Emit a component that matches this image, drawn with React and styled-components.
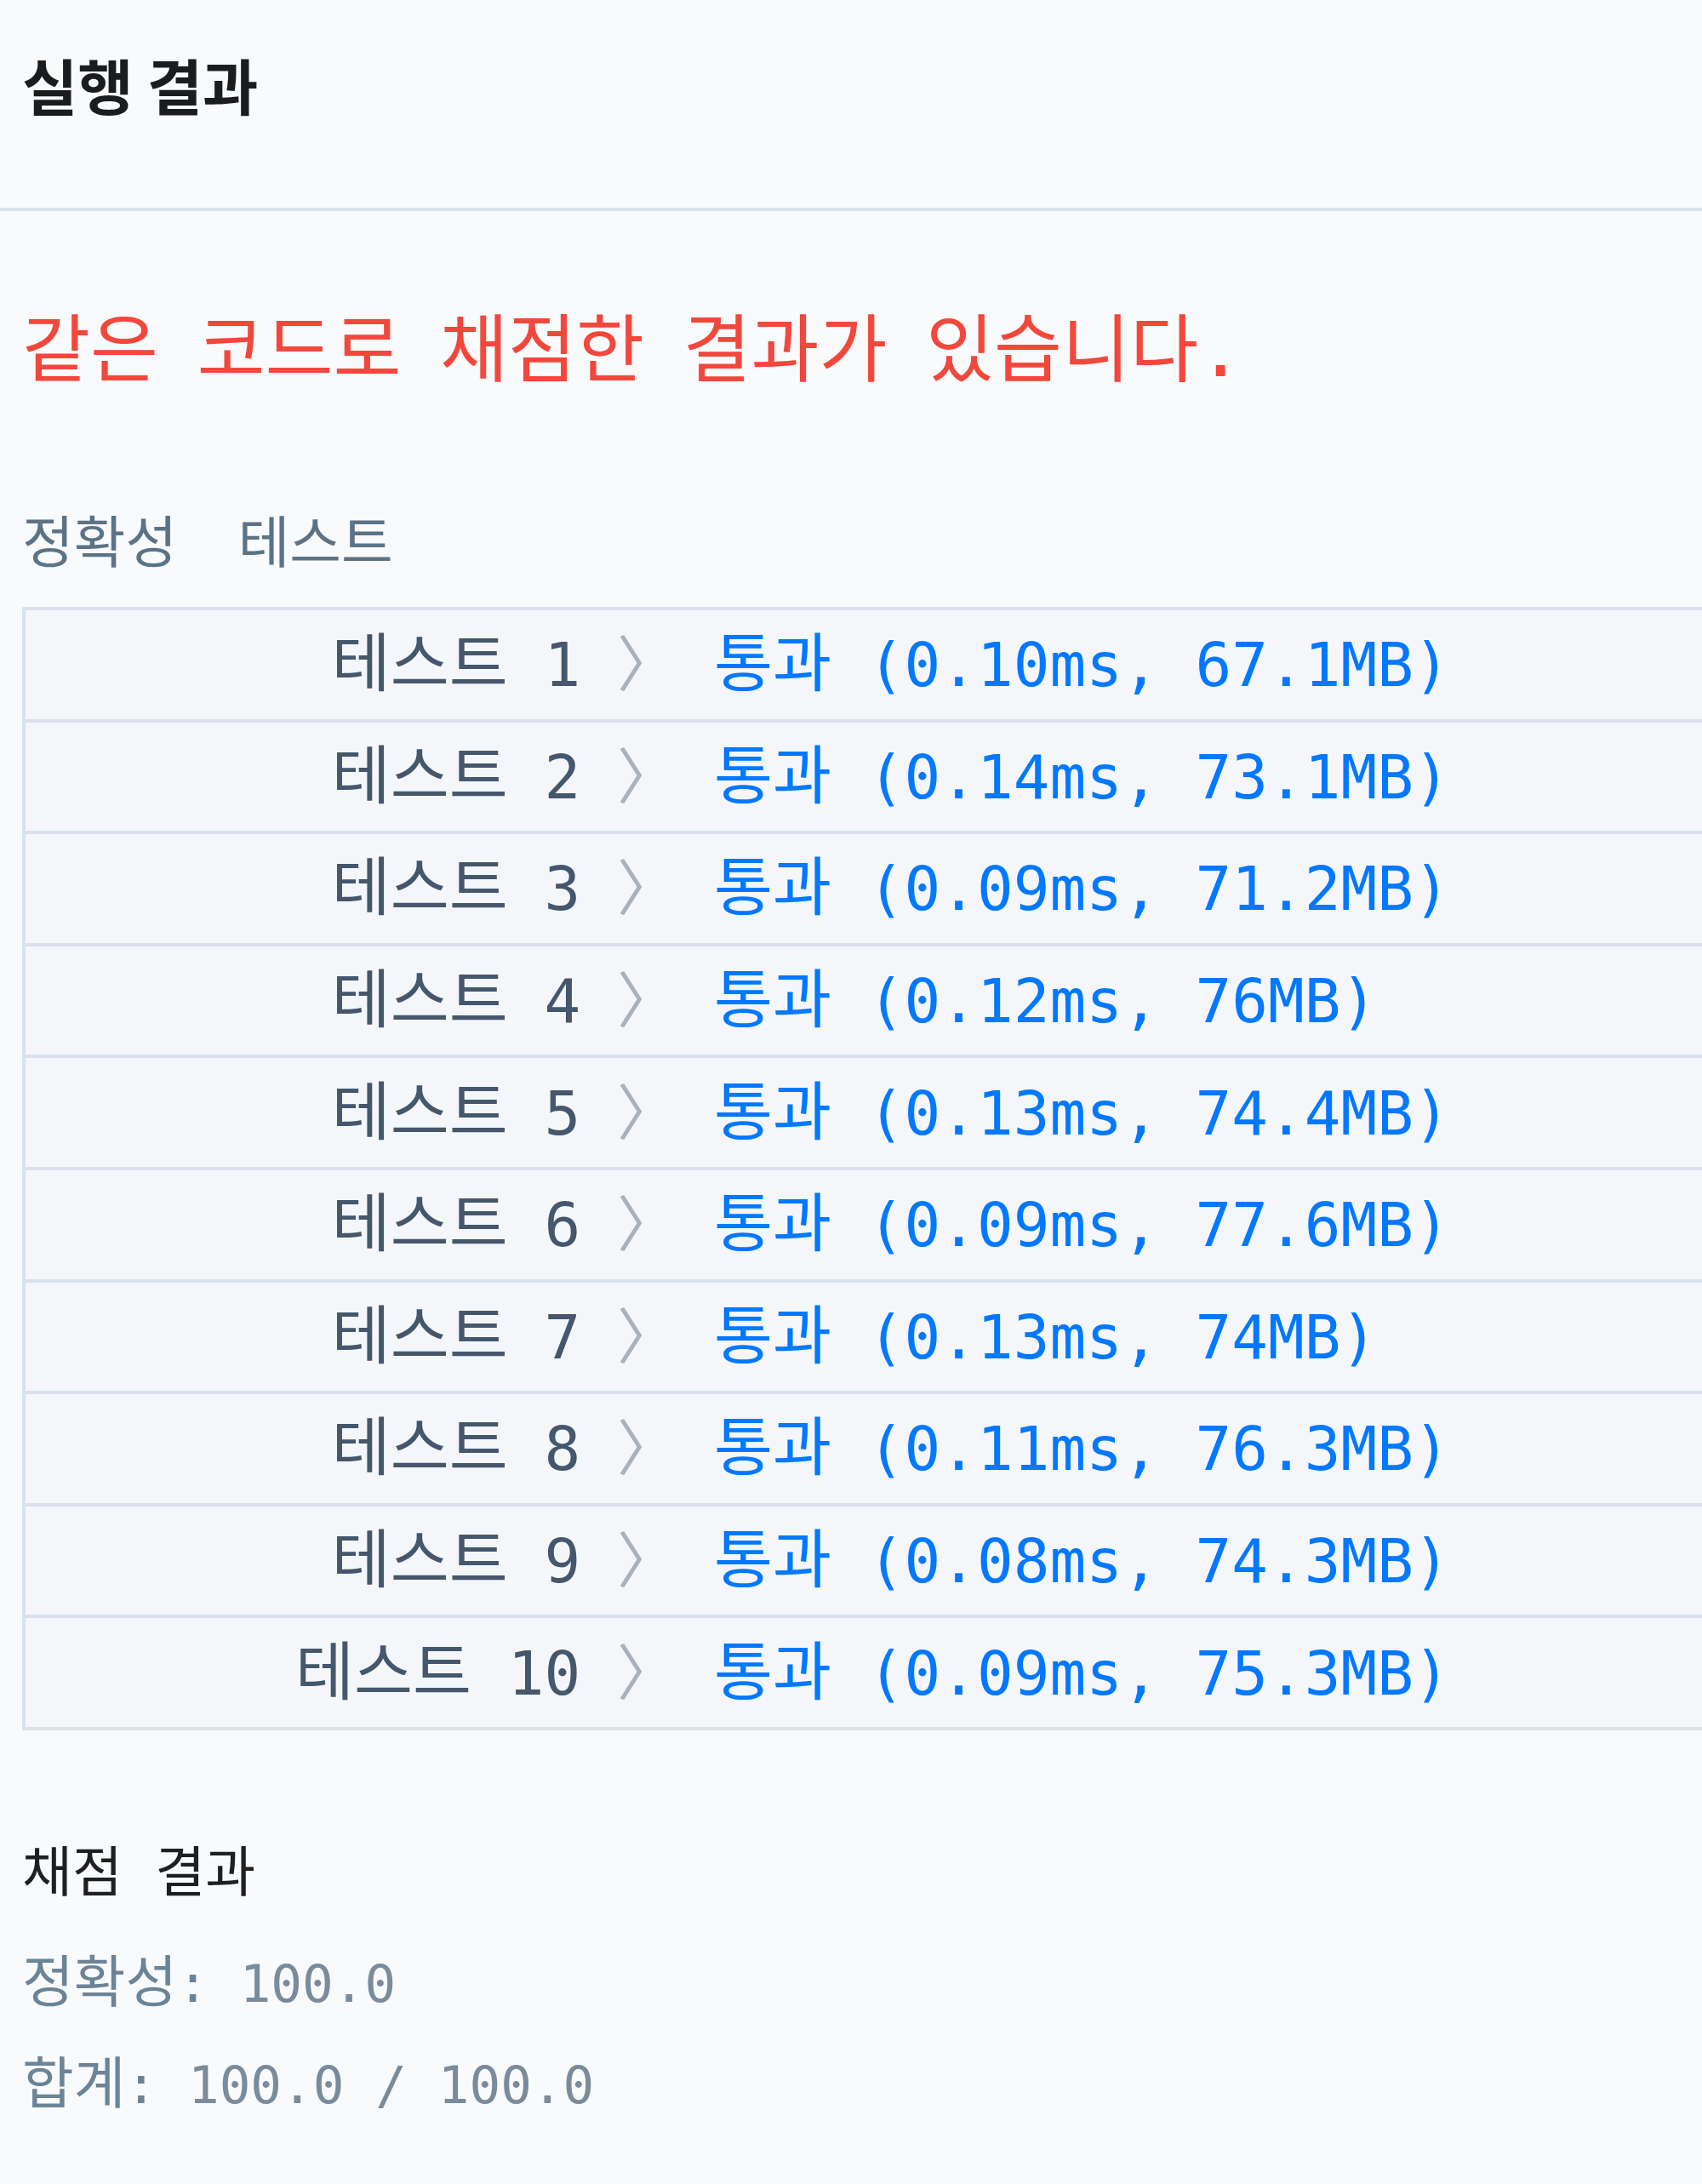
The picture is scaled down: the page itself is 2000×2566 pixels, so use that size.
import React from "react";
import styled, { createGlobalStyle } from "styled-components";

const GlobalStyle = createGlobalStyle`
  html, body {
    margin: 0;
    padding: 0;
    background: #f9fafc;
    overflow: hidden;
  }
`;

const mono = `"DejaVu Sans Mono", "Noto Sans CJK KR", monospace`;

const Page = styled.div`
  width: 100%;
  min-height: 2566px;
  background: #f9fafc;
`;

const Header = styled.div`
  padding: 0 0 48px 26px;
  border-bottom: 4px solid #d8e2eb;
`;

const Title = styled.h4`
  margin: 0;
  font-family: "Noto Sans CJK KR", sans-serif;
  font-weight: 700;
  font-size: 71px;
  line-height: 196px;
  color: #1b1c1e;
`;

const Body = styled.div`
  padding-left: 26px;
  font-family: ${mono};
`;

const Message = styled.p`
  margin: 104px 0 0;
  font-size: 87px;
  word-spacing: -7px;
  line-height: 120px;
  color: #f2473b;
`;

const SectionLabel = styled.p`
  margin: 127px 0 0;
  font-size: 66px;
  word-spacing: -4px;
  line-height: 80px;
  color: #5b7387;
  white-space: pre;
`;

/* hangul glyphs sit wider than the latin mono cells in the original */
const Hangul = styled.span`
  font-size: ${(p) => p.$size}px;
`;

const Table = styled.div`
  margin-top: 34px;
  width: 2100px;
  border-top: 4px solid #d8e2eb;
  border-left: 4px solid #d8e2eb;
`;

const Row = styled.div`
  display: grid;
  grid-template-columns: 766px 1fr;
  align-items: center;
  height: 127.6px;
  background: #f5f6fa;
  border-bottom: 4px solid #d8e2eb;
  font-size: 71px;
  line-height: 1;
`;

const Label = styled.span`
  text-align: right;
  color: #44576c;
  white-space: pre;
`;

const Chevron = styled.span`
  color: #a9b1ba;
`;

const Result = styled.span`
  padding-left: 43px;
  color: #0078ff;
  white-space: pre;
`;

const Heading = styled.p`
  margin: 127px 0 0;
  font-size: 64px;
  line-height: 80px;
  color: #1e1f21;
  white-space: pre;
`;

const Score = styled.p`
  margin: ${(p) => p.$top}px 0 0;
  font-size: 61px;
  line-height: 80px;
  color: #6b8497;
  white-space: pre;
`;

const Value = styled.span`
  color: #7a8b9b;
`;

const results = [
  ["0.10ms", "67.1MB"],
  ["0.14ms", "73.1MB"],
  ["0.09ms", "71.2MB"],
  ["0.12ms", "76MB"],
  ["0.13ms", "74.4MB"],
  ["0.09ms", "77.6MB"],
  ["0.13ms", "74MB"],
  ["0.11ms", "76.3MB"],
  ["0.08ms", "74.3MB"],
  ["0.09ms", "75.3MB"],
];

export default function App() {
  return (
    <Page>
      <GlobalStyle />
      <Header>
        <Title>실행 결과</Title>
      </Header>
      <Body>
        <Message>같은 코드로 채점한 결과가 있습니다.</Message>
        <SectionLabel>{"정확성  테스트"}</SectionLabel>
        <Table>
          {results.map(([time, mem], i) => (
            <Row key={i}>
              <Label>
                <Hangul $size={75}>테스트</Hangul>
                {` ${i + 1} `}
                <Chevron>〉</Chevron>
              </Label>
              <Result>
                <Hangul $size={75}>통과</Hangul>
                {` (${time}, ${mem})`}
              </Result>
            </Row>
          ))}
        </Table>
        <Heading>{"채점 결과"}</Heading>
        <Score $top={50}>
          <Hangul $size={66}>정확성</Hangul>
          {": "}
          <Value>100.0</Value>
        </Score>
        <Score $top={38}>
          <Hangul $size={66}>합계</Hangul>
          {": "}
          <Value>100.0 / 100.0</Value>
        </Score>
      </Body>
    </Page>
  );
}
